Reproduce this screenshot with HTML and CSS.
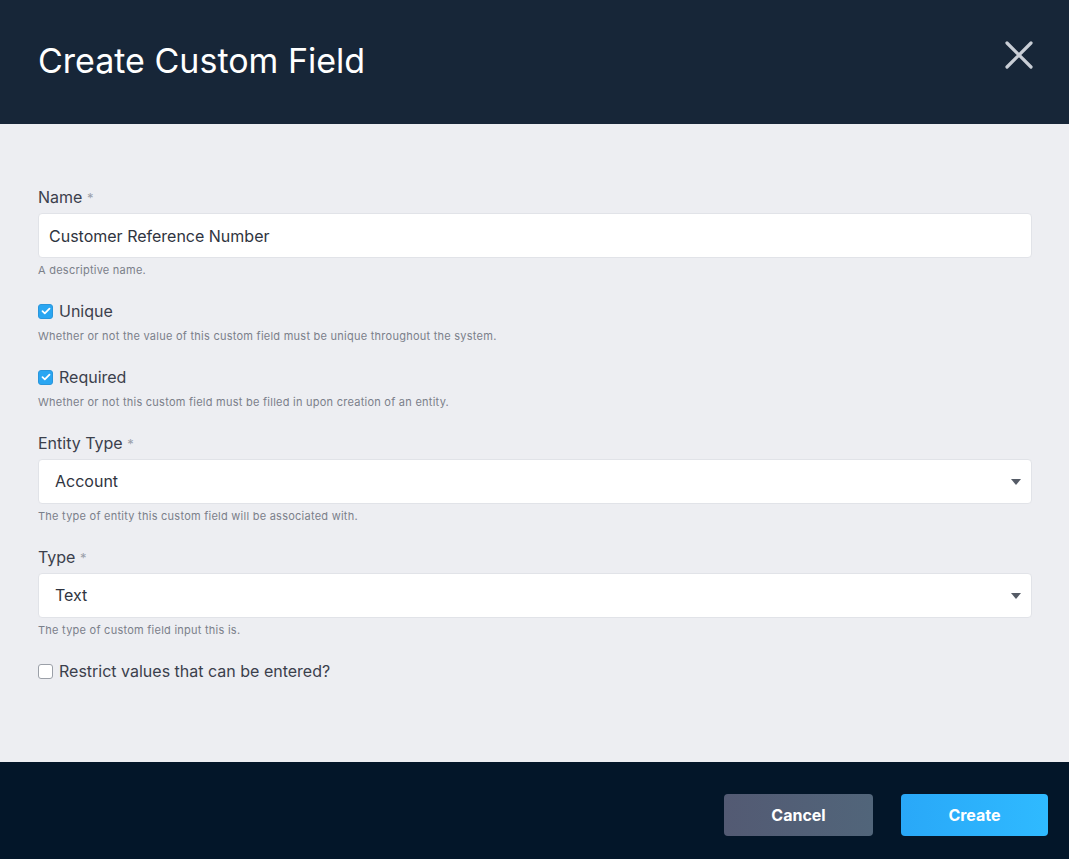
FILE: index.html
```html
<!DOCTYPE html>
<html lang="en">
<head>
    <meta charset="UTF-8">
    <meta name="viewport" content="width=device-width, initial-scale=1.0">
    <title>Create Custom Field</title>
    <link rel="stylesheet" href="styles.css">
</head>
<body>
    <div class="modal">
        <header class="modal-head">
            <h1>Create Custom Field</h1>
            <button class="close" aria-label="Close">
                <svg width="28" height="28" viewBox="0 0 28 28"><path d="M2 2L26 26M26 2L2 26" stroke="#c9ced6" stroke-width="3.2" stroke-linecap="round"/></svg>
            </button>
        </header>

        <section class="modal-body">
            <div class="field">
                <label class="label">Name <span class="req">*</span></label>
                <input class="input" value="Customer Reference Number">
                <div class="help">A descriptive name.</div>
            </div>

            <div class="field">
                <label class="check"><span class="box on"><svg width="10" height="8" viewBox="0 0 10 8"><path d="M1.5 4.2L3.8 6.3L8.5 1.6" fill="none" stroke="#fff" stroke-width="1.8" stroke-linecap="round" stroke-linejoin="round"/></svg></span>Unique</label>
                <div class="help">Whether or not the value of this custom field must be unique throughout the system.</div>
            </div>

            <div class="field">
                <label class="check"><span class="box on"><svg width="10" height="8" viewBox="0 0 10 8"><path d="M1.5 4.2L3.8 6.3L8.5 1.6" fill="none" stroke="#fff" stroke-width="1.8" stroke-linecap="round" stroke-linejoin="round"/></svg></span>Required</label>
                <div class="help">Whether or not this custom field must be filled in upon creation of an entity.</div>
            </div>

            <div class="field">
                <label class="label">Entity Type <span class="req">*</span></label>
                <div class="select">Account<span class="caret"></span></div>
                <div class="help">The type of entity this custom field will be associated with.</div>
            </div>

            <div class="field">
                <label class="label">Type <span class="req">*</span></label>
                <div class="select">Text<span class="caret"></span></div>
                <div class="help">The type of custom field input this is.</div>
            </div>

            <div class="field">
                <label class="check"><span class="box"></span>Restrict values that can be entered?</label>
            </div>
        </section>

        <footer class="modal-foot">
            <button class="btn cancel">Cancel</button>
            <button class="btn create">Create</button>
        </footer>
    </div>
</body>
</html>
```
FILE: styles.css
```css
body{
    margin: 0;
    font-family: Inter, "Noto Sans", sans-serif;
    background-color: #edeef2;
}

.modal{
    display: flex;
    flex-direction: column;
    height: 859px;
}

.modal-head{
    display: flex;
    justify-content: space-between;
    align-items: center;
    height: 124px;
    padding: 0 36px 4px 38px;
    box-sizing: border-box;
    background-color: #172638;
}

.modal-head h1{
    margin: 0;
    font-size: 34px;
    font-weight: 400;
    color: #ffffff;
    letter-spacing: 0;
}

.close{
    background: none;
    border: 0;
    padding: 0;
    margin-top: -8px;
    cursor: pointer;
}

.modal-body{
    flex: 1;
    padding: 63px 37px 0 38px;
}

.field{
    margin-bottom: 24px;
}

.label{
    display: block;
    font-size: 16px;
    color: #3b404c;
    margin-bottom: 6px;
}

.req{
    color: #9aa0aa;
    font-size: 13px;
}

.input, .select{
    display: block;
    width: 100%;
    box-sizing: border-box;
    height: 45px;
    background-color: #fff;
    border: 1px solid #e1e3e8;
    border-radius: 4px;
    font-family: inherit;
    font-size: 16px;
    color: #2f3440;
}

.input{
    padding: 0 10px;
}

.select{
    position: relative;
    line-height: 43px;
    padding: 0 16px;
}

.caret{
    position: absolute;
    right: 10px;
    top: 19px;
    border-left: 5px solid transparent;
    border-right: 5px solid transparent;
    border-top: 6px solid #555b66;
}

.help{
    margin-top: 5px;
    font-size: 11px;
    letter-spacing: 0.25px;
    color: #7b808a;
}

.check + .help{
    margin-top: 8px;
}

.check{
    display: flex;
    align-items: center;
    gap: 6px;
    font-size: 16px;
    color: #3b404c;
}

.box{
    display: flex;
    align-items: center;
    justify-content: center;
    width: 15px;
    height: 15px;
    box-sizing: border-box;
    border: 1px solid #9ba0a8;
    border-radius: 3px;
    background-color: #fff;
}

.box.on{
    background-color: #2aa6f2;
    border-color: #2a96dc;
}

.modal-foot{
    display: flex;
    justify-content: flex-end;
    align-items: center;
    gap: 28px;
    height: 97px;
    padding: 8px 21px 0 0;
    box-sizing: border-box;
    background-color: #031629;
}

.btn{
    height: 42px;
    border: 0;
    border-radius: 4px;
    font-family: inherit;
    font-size: 16px;
    font-weight: 700;
    color: #fff;
    cursor: pointer;
}

.cancel{
    width: 149px;
    background: linear-gradient(90deg, #535a73, #51657a);
}

.create{
    width: 147px;
    background: linear-gradient(90deg, #29a8f8, #2fbaff);
}
```
